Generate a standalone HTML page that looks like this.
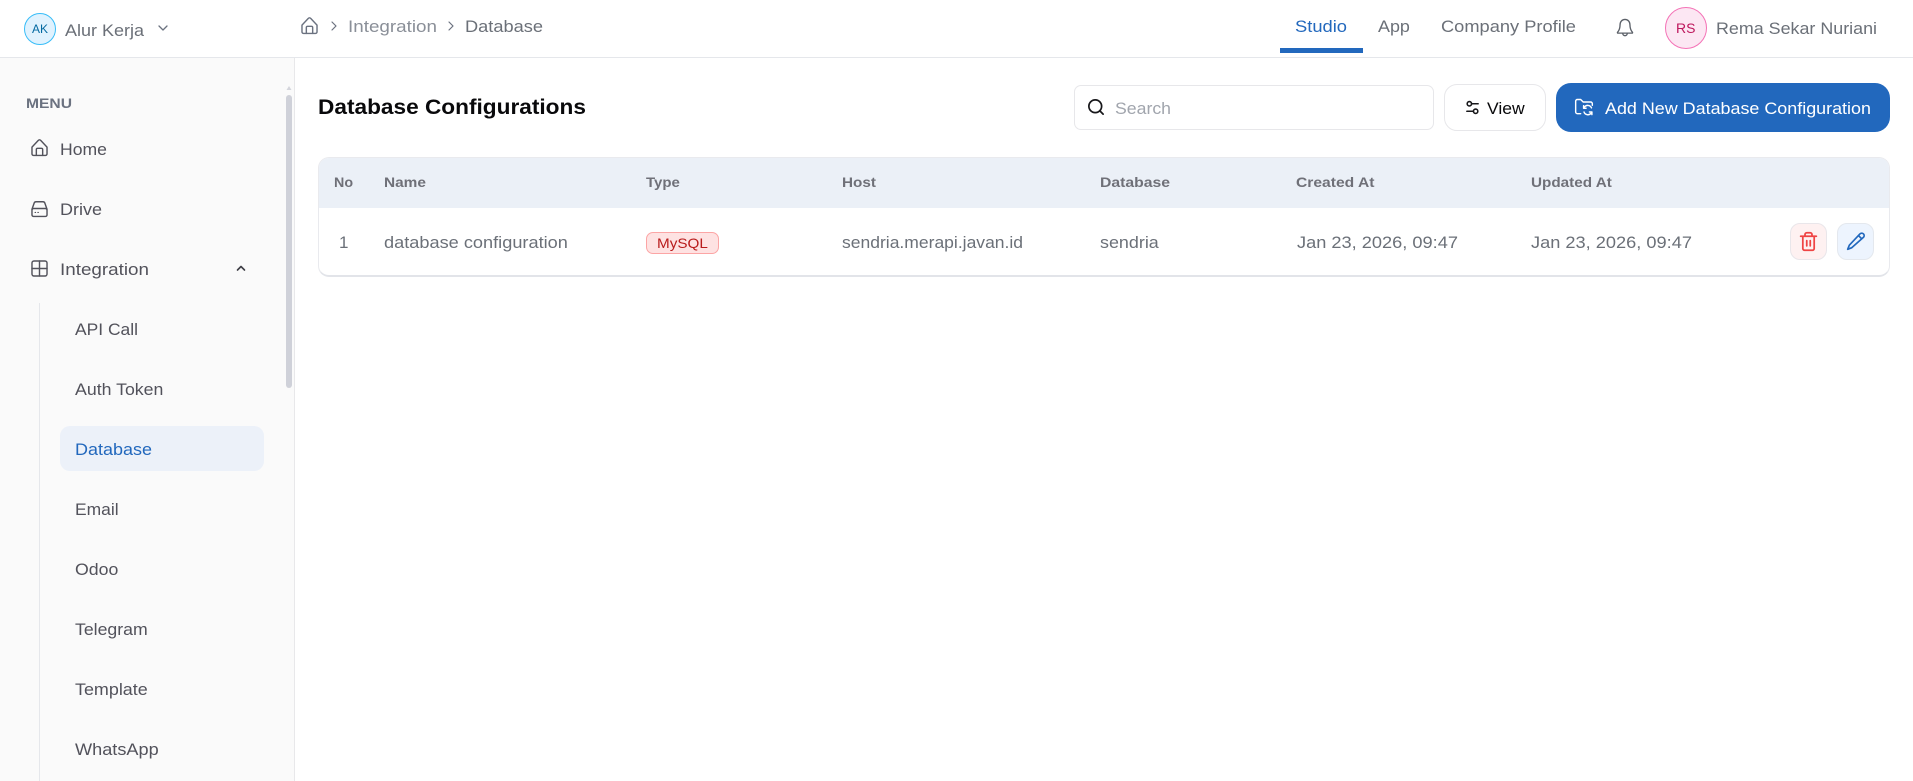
<!DOCTYPE html>
<html lang="id">
<head>
<meta charset="utf-8">
<title>Database Configurations</title>
<style>
html,body{margin:0;padding:0;background:#fff;width:1913px;height:781px;overflow:hidden;font-family:"Liberation Sans",sans-serif}
.b{position:absolute;box-sizing:border-box}
.t{position:absolute;white-space:nowrap;line-height:24px;height:24px;font-size:17px;transform-origin:0 50%;color:#52525b}
.h{font-size:14px;font-weight:700;color:#6f7078}
.r{color:#6b7078}
svg{position:absolute;overflow:visible;fill:none;stroke-linecap:round;stroke-linejoin:round}
</style>
</head>
<body>
<!-- sidebar -->
<div class="b" style="left:0;top:58px;width:295px;height:723px;background:#fafafa;border-right:1px solid #e8e8ea"></div>
<!-- header border -->
<div class="b" style="left:0;top:57px;width:1913px;height:1px;background:#e5e7eb"></div>

<!-- top left -->
<div class="b" style="left:24px;top:13px;width:32px;height:32px;border-radius:50%;background:#e0f2fe;border:1px solid #38bdf8"></div>
<div class="t" style="left:32px;top:17px;font-size:12px;color:#0369a1">AK</div>
<div class="t r" style="left:65px;top:18.500px;transform:scaleX(1.059)">Alur Kerja</div>
<svg style="left:158px;top:25px" width="10" height="7" viewBox="0 0 10 7" stroke="#6b7280" stroke-width="1.3"><path d="M1 1l4 4 4-4"/></svg>

<!-- breadcrumb -->
<svg style="left:300px;top:16px" width="19" height="19" viewBox="0 0 24 24" stroke="#6b7280" stroke-width="1.8"><path d="M2.500 11.500L10.500 3a2 2 0 0 1 3 0l8 8.500V20a2 2 0 0 1-2 2H4.500a2 2 0 0 1-2-2z"/><path d="M8 22v-7.500a1.500 1.500 0 0 1 1.500-1.500h5a1.500 1.500 0 0 1 1.500 1.500V22"/></svg>
<svg style="left:331px;top:21px" width="6" height="10" viewBox="0 0 6 10" stroke="#6b7280" stroke-width="1.2"><path d="M1 1l4 4-4 4"/></svg>
<div class="t" style="left:348px;top:14.500px;color:#8a8f98;transform:scaleX(1.108)">Integration</div>
<svg style="left:448px;top:21px" width="6" height="10" viewBox="0 0 6 10" stroke="#6b7280" stroke-width="1.2"><path d="M1 1l4 4-4 4"/></svg>
<div class="t r" style="left:465px;top:14.500px;transform:scaleX(1.072)">Database</div>

<!-- top nav -->
<div class="t" style="left:1295px;top:14.500px;color:#2268bd;transform:scaleX(1.079)">Studio</div>
<div class="b" style="left:1280px;top:48px;width:83px;height:5px;background:#2268bd"></div>
<div class="t r" style="left:1378px;top:14.500px;transform:scaleX(1.054)">App</div>
<div class="t r" style="left:1441px;top:14.500px;transform:scaleX(1.074)">Company Profile</div>
<svg style="left:1616px;top:18px" width="18" height="20" viewBox="0 0 20 22" stroke="#5b6068" stroke-width="1.500"><path d="M10 1.500c-3.500 0-5.500 2.700-5.500 6 0 3.800-1 6.200-2.800 8.300-.3.400 0 .9.500.9h15.600c.5 0 .8-.5.500-.9-1.800-2.100-2.800-4.500-2.800-8.300 0-3.300-2-6-5.500-6z"/><path d="M7.500 17a2.500 2.500 0 0 0 5 0"/></svg>
<div class="b" style="left:1665px;top:7px;width:42px;height:42px;border-radius:50%;background:#fce7f3;border:1px solid #f472b6"></div>
<div class="t" style="left:1676px;top:16px;font-size:14px;color:#be185d">RS</div>
<div class="t r" style="left:1716px;top:16.500px;transform:scaleX(1.052)">Rema Sekar Nuriani</div>

<!-- sidebar content -->
<div class="t" style="left:26px;top:90.500px;font-size:14px;font-weight:700;color:#6b7280;transform:scaleX(1.116)">MENU</div>
<svg style="left:30px;top:138px" width="19" height="19" viewBox="0 0 24 24" stroke="#52525b" stroke-width="1.8"><path d="M2.500 11.500L10.500 3a2 2 0 0 1 3 0l8 8.500V20a2 2 0 0 1-2 2H4.500a2 2 0 0 1-2-2z"/><path d="M8 22v-7.500a1.500 1.500 0 0 1 1.500-1.500h5a1.500 1.500 0 0 1 1.500 1.500V22"/></svg>
<div class="t" style="left:60px;top:137.500px;transform:scaleX(1.035)">Home</div>
<svg style="left:30px;top:198.500px" width="19" height="19" viewBox="0 0 24 24" stroke="#52525b" stroke-width="1.8"><path d="M2.500 13l2.800-8a2.500 2.500 0 0 1 2.400-1.500h8.600a2.500 2.500 0 0 1 2.400 1.500l2.800 8"/><rect x="2.500" y="12" width="19" height="10" rx="2"/><path d="M6.500 17h.5M10 17h.5" stroke-width="1.500"/></svg>
<div class="t" style="left:60px;top:197.500px;transform:scaleX(1.059)">Drive</div>
<svg style="left:30px;top:259px" width="19" height="19" viewBox="0 0 24 24" stroke="#52525b" stroke-width="1.8"><rect x="2.500" y="2.500" width="19" height="19" rx="2.500"/><path d="M12 2.500v19M2.500 12h19"/></svg>
<div class="t" style="left:60px;top:257.500px;transform:scaleX(1.108)">Integration</div>
<svg style="left:236px;top:265px" width="10" height="7" viewBox="0 0 10 7" stroke="#3f3f46" stroke-width="1.6"><path d="M1.500 5L5 1.500 8.500 5"/></svg>

<div class="b" style="left:39px;top:303px;width:1px;height:478px;background:#e5e7eb"></div>
<div class="b" style="left:60px;top:426px;width:204px;height:45px;border-radius:10px;background:#ecf1f9"></div>
<div class="t" style="left:75px;top:317.500px;transform:scaleX(1.026)">API Call</div>
<div class="t" style="left:75px;top:377.500px;transform:scaleX(1.043)">Auth Token</div>
<div class="t" style="left:75px;top:437.500px;color:#2268bd;transform:scaleX(1.058)">Database</div>
<div class="t" style="left:75px;top:497.500px;transform:scaleX(1.026)">Email</div>
<div class="t" style="left:75px;top:557.500px;transform:scaleX(1.042)">Odoo</div>
<div class="t" style="left:75px;top:617.500px;transform:scaleX(1.04)">Telegram</div>
<div class="t" style="left:75px;top:677.500px;transform:scaleX(1.054)">Template</div>
<div class="t" style="left:75px;top:737.500px;transform:scaleX(1.067)">WhatsApp</div>

<!-- scrollbar -->
<svg style="left:286px;top:85px" width="6" height="6" viewBox="0 0 6 6"><path d="M3 1L5.500 5H.5z" fill="#d4d5dc"/></svg>
<div class="b" style="left:286px;top:95px;width:6px;height:293px;border-radius:3px;background:#cfd1d9"></div>

<!-- title and toolbar -->
<div class="t" style="left:318px;top:96px;font-size:21px;font-weight:700;color:#09090b;transform:scaleX(1.078)">Database Configurations</div>

<div class="b" style="left:1074px;top:85px;width:360px;height:45px;border:1px solid #e7e7ea;border-radius:7px;background:#fff"></div>
<svg style="left:1087px;top:98px" width="18" height="18" viewBox="0 0 24 24" stroke="#18181b" stroke-width="2.300"><circle cx="11" cy="11" r="8.500"/><path d="M21.500 21.500l-4.500-4.500"/></svg>
<div class="t" style="left:1115px;top:96.500px;color:#a1a5ad;transform:scaleX(1.04)">Search</div>

<div class="b" style="left:1444px;top:84px;width:102px;height:47px;border:1px solid #e7e7ea;border-radius:13px;background:#fff"></div>
<svg style="left:1465px;top:100px" width="15" height="15" viewBox="0 0 24 24" stroke="#18181b" stroke-width="2.500"><circle cx="7" cy="6" r="3.500"/><path d="M10.500 6H21"/><circle cx="17" cy="18" r="3.500"/><path d="M13.500 18H3"/></svg>
<div class="t" style="left:1487px;top:96.500px;color:#09090b;transform:scaleX(1.031)">View</div>

<div class="b" style="left:1556px;top:83px;width:334px;height:49px;border-radius:15px;background:#2268bd"></div>
<svg style="left:1574px;top:97px" width="20" height="20" viewBox="0 0 24 24" stroke="#fff" stroke-width="1.700"><path d="M8 20H4a2 2 0 0 1-2-2V5a2 2 0 0 1 2-2h4l3 3h9a2 2 0 0 1 2 2v2"/><path d="M21 13a5 5 0 0 0-8.500-1l-1 1.200V10.500M12 18a5 5 0 0 0 8.500 1.500l1-1.200v2.900"/><path d="M11.500 13.500h3M21.500 18h-3"/></svg>
<div class="t" style="left:1605px;top:96.500px;color:#fff;transform:scaleX(1.054)">Add New Database Configuration</div>

<!-- table -->
<div class="b" style="left:318px;top:157px;width:1572px;height:120px;border:1px solid #e9eaee;border-bottom:2px solid #e2e4e9;border-radius:11px;background:#fff;overflow:hidden">
  <div style="height:50px;background:#ebf0f7"></div>
</div>
<div class="t h" style="left:334px;top:170px;transform:scaleX(1.02)">No</div>
<div class="t h" style="left:384px;top:170px;transform:scaleX(1.1)">Name</div>
<div class="t h" style="left:646px;top:170px;transform:scaleX(1.07)">Type</div>
<div class="t h" style="left:842px;top:170px;transform:scaleX(1.09)">Host</div>
<div class="t h" style="left:1100px;top:170px;transform:scaleX(1.125)">Database</div>
<div class="t h" style="left:1296px;top:170px;transform:scaleX(1.116)">Created At</div>
<div class="t h" style="left:1531px;top:170px;transform:scaleX(1.09)">Updated At</div>

<div class="t r" style="left:339px;top:230.500px">1</div>
<div class="t r" style="left:384px;top:230.500px;transform:scaleX(1.069)">database configuration</div>
<div class="b" style="left:646px;top:232px;width:73px;height:22px;border-radius:7px;background:#fee2e2;border:1px solid #fca5a5"></div>
<div class="t" style="left:657px;top:231px;font-size:14px;color:#b91c1c;transform:scaleX(1.09)">MySQL</div>
<div class="t r" style="left:842px;top:230.500px;transform:scaleX(1.03)">sendria.merapi.javan.id</div>
<div class="t r" style="left:1100px;top:230.500px;transform:scaleX(1.054)">sendria</div>
<div class="t r" style="left:1297px;top:230.500px;transform:scaleX(1.071)">Jan 23, 2026, 09:47</div>
<div class="t r" style="left:1531px;top:230.500px;transform:scaleX(1.071)">Jan 23, 2026, 09:47</div>

<div class="b" style="left:1790px;top:223px;width:37px;height:37px;border-radius:10px;background:#fef1f1;border:1px solid #e9e6ea"></div>
<svg style="left:1798px;top:231px" width="21" height="21" viewBox="0 0 24 24" stroke="#ef4444" stroke-width="2"><path d="M3 6h18M8 6V4a2 2 0 0 1 2-2h4a2 2 0 0 1 2 2v2M5.500 6v14a2 2 0 0 0 2 2h9a2 2 0 0 0 2-2V6M10 11v6M14 11v6"/></svg>
<div class="b" style="left:1837px;top:223px;width:37px;height:37px;border-radius:10px;background:#edf4fe;border:1px solid #e4e8ee"></div>
<svg style="left:1846px;top:231px" width="20" height="20" viewBox="0 0 24 24" stroke="#2268bd" stroke-width="2"><path d="M21 3.500a3 3 0 0 0-4.300 0L4 17l-2 5 5-2L21 7.500a3 3 0 0 0 0-4z"/><path d="M15 5.500l3.500 3.500"/></svg>
</body>
</html>
